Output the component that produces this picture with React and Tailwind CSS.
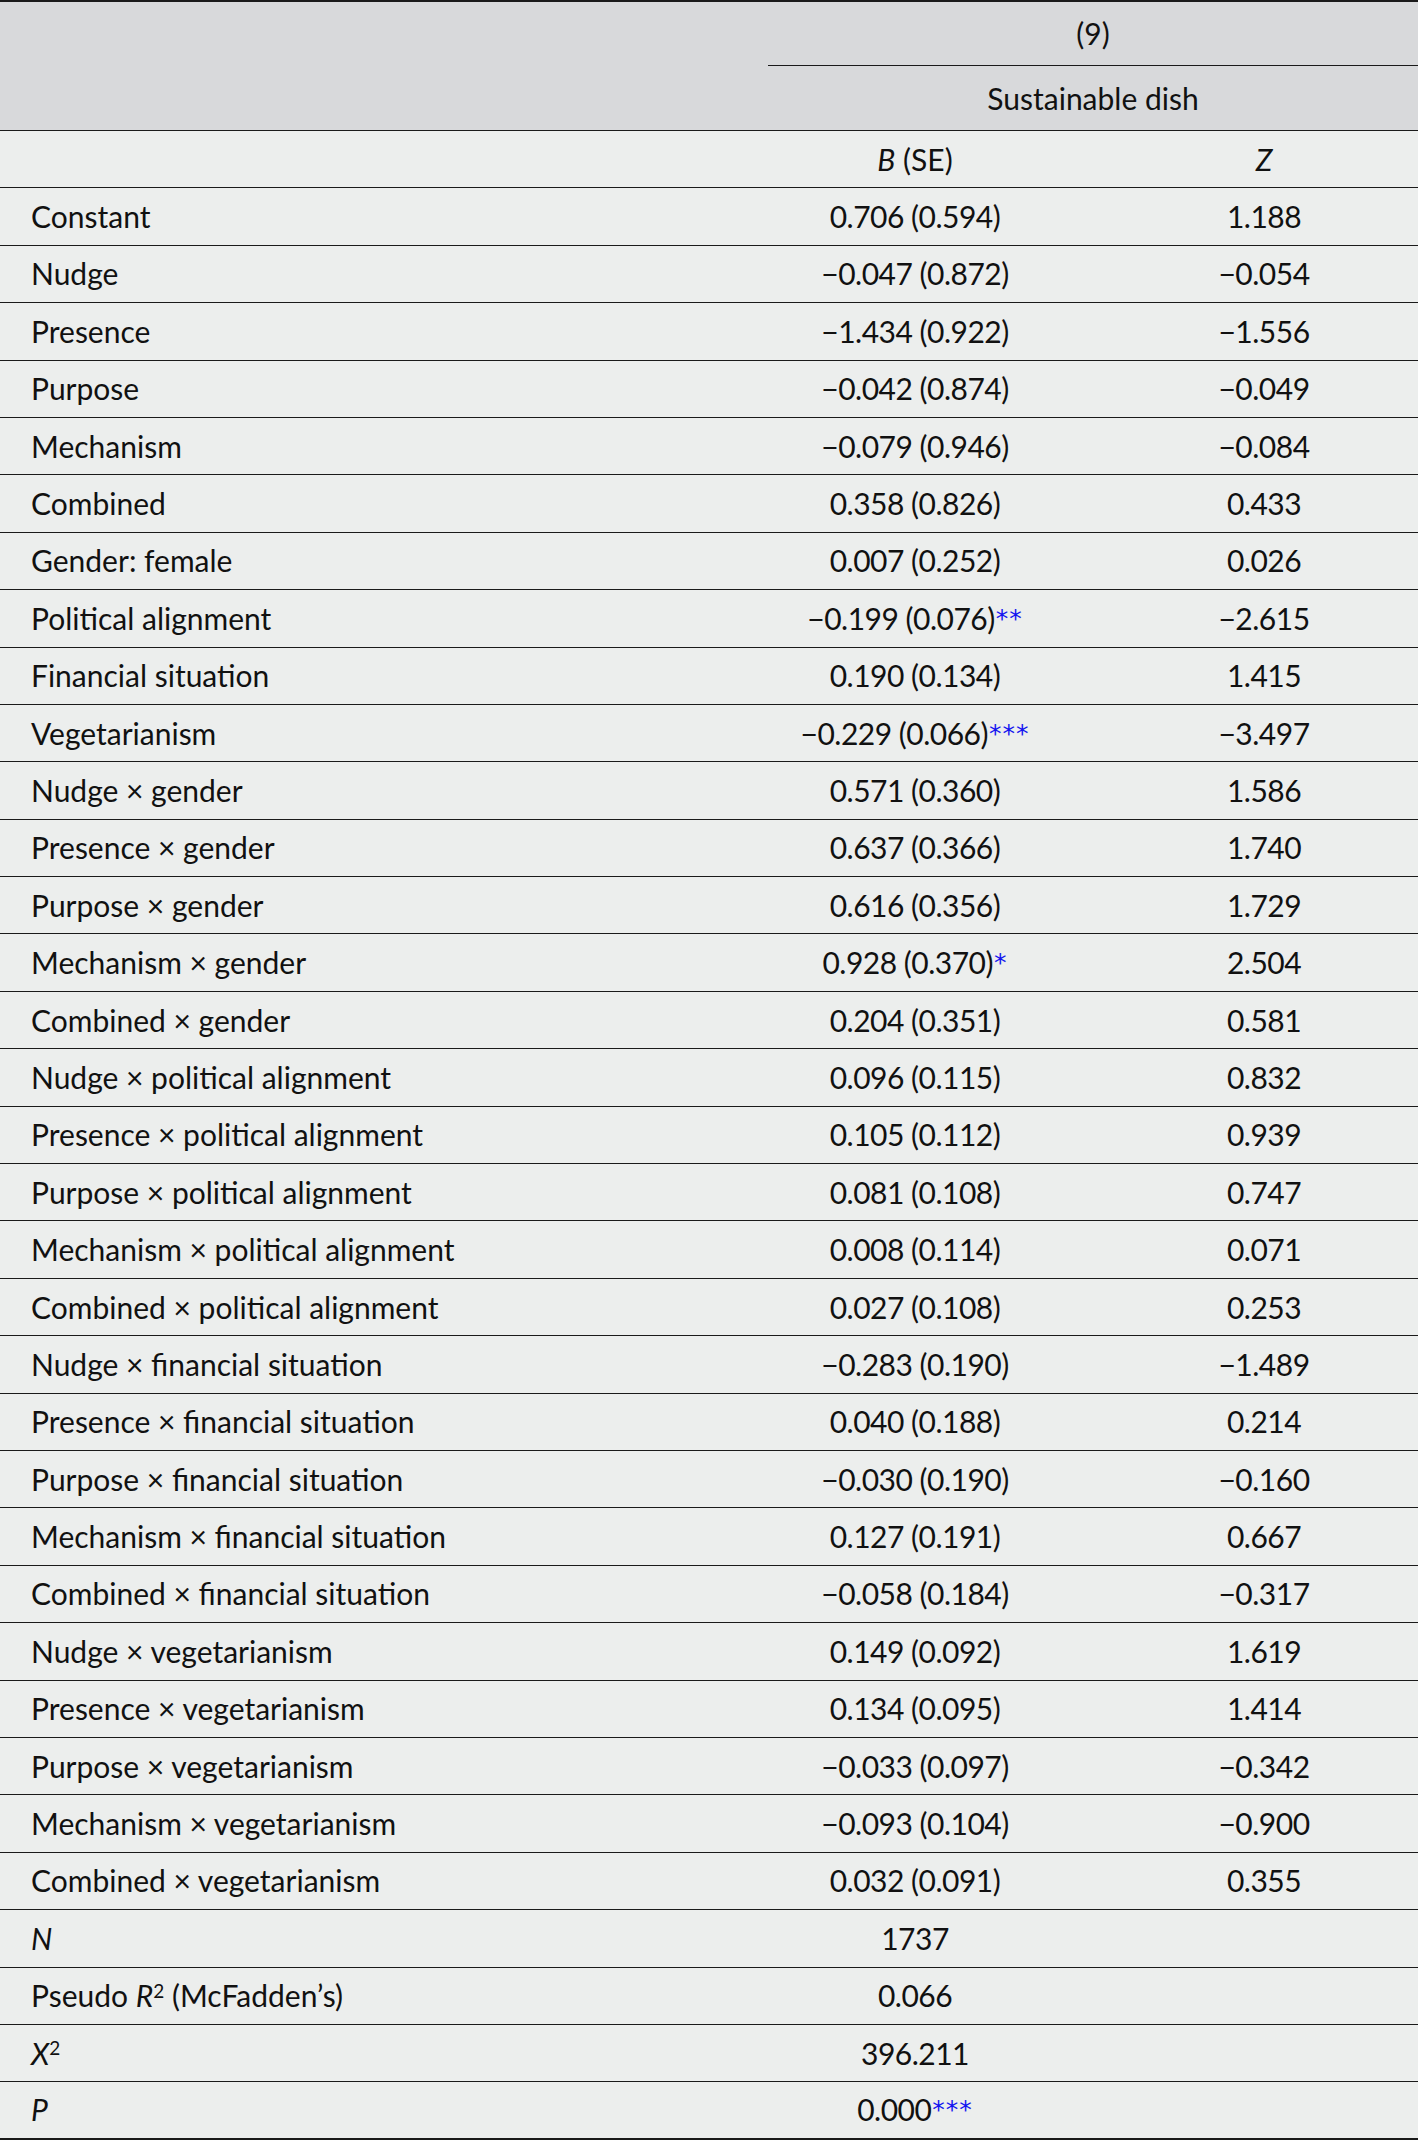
const rows = [
  ["Constant", "0.706 (0.594)", "", "1.188"],
  ["Nudge", "−0.047 (0.872)", "", "−0.054"],
  ["Presence", "−1.434 (0.922)", "", "−1.556"],
  ["Purpose", "−0.042 (0.874)", "", "−0.049"],
  ["Mechanism", "−0.079 (0.946)", "", "−0.084"],
  ["Combined", "0.358 (0.826)", "", "0.433"],
  ["Gender: female", "0.007 (0.252)", "", "0.026"],
  ["Political alignment", "−0.199 (0.076)", "**", "−2.615"],
  ["Financial situation", "0.190 (0.134)", "", "1.415"],
  ["Vegetarianism", "−0.229 (0.066)", "***", "−3.497"],
  ["Nudge × gender", "0.571 (0.360)", "", "1.586"],
  ["Presence × gender", "0.637 (0.366)", "", "1.740"],
  ["Purpose × gender", "0.616 (0.356)", "", "1.729"],
  ["Mechanism × gender", "0.928 (0.370)", "*", "2.504"],
  ["Combined × gender", "0.204 (0.351)", "", "0.581"],
  ["Nudge × political alignment", "0.096 (0.115)", "", "0.832"],
  ["Presence × political alignment", "0.105 (0.112)", "", "0.939"],
  ["Purpose × political alignment", "0.081 (0.108)", "", "0.747"],
  ["Mechanism × political alignment", "0.008 (0.114)", "", "0.071"],
  ["Combined × political alignment", "0.027 (0.108)", "", "0.253"],
  ["Nudge × financial situation", "−0.283 (0.190)", "", "−1.489"],
  ["Presence × financial situation", "0.040 (0.188)", "", "0.214"],
  ["Purpose × financial situation", "−0.030 (0.190)", "", "−0.160"],
  ["Mechanism × financial situation", "0.127 (0.191)", "", "0.667"],
  ["Combined × financial situation", "−0.058 (0.184)", "", "−0.317"],
  ["Nudge × vegetarianism", "0.149 (0.092)", "", "1.619"],
  ["Presence × vegetarianism", "0.134 (0.095)", "", "1.414"],
  ["Purpose × vegetarianism", "−0.033 (0.097)", "", "−0.342"],
  ["Mechanism × vegetarianism", "−0.093 (0.104)", "", "−0.900"],
  ["Combined × vegetarianism", "0.032 (0.091)", "", "0.355"],
];

// significance stars, drawn a bit heavier than Lato's own asterisk
function Stars({ s }) {
  if (!s) return null;
  return (
    <sup
      className="text-[#1414f0] text-[25px] tracking-[1px] relative top-[-3px] ml-[1px]"
      style={{ fontFamily: "'DejaVu Sans', sans-serif" }}
    >
      {s}
    </sup>
  );
}

function Row({ label, b, stars, z, last }) {
  return (
    <div
      className={
        "grid grid-cols-[768px_294px_1fr] items-center h-[57.4px] " +
        (last ? "border-b-2 border-[#1a1a1a]" : "border-b-[1.5px] border-[#1a1a1a]")
      }
    >
      <div className="pl-[31px]">{label}</div>
      <div className="text-center tracking-[-0.5px]">
        {b}
        <Stars s={stars} />
      </div>
      <div className="text-center pl-[48px] tracking-[-0.5px]">{z}</div>
    </div>
  );
}

export default function App() {
  return (
    <div
      className="w-[1418px] bg-[#eceeed] text-[30px] text-[#111] border-t-2 border-[#1a1a1a]"
      style={{ fontFamily: "Lato, 'Noto Sans', sans-serif" }}
    >
      <div className="bg-[#d8d9db] border-b-[1.5px] border-[#1a1a1a]">
        <div className="grid grid-cols-[768px_1fr] h-[64px]">
          <div></div>
          <div className="flex items-center justify-center border-b-[1.5px] border-[#1a1a1a]">(9)</div>
        </div>
        <div className="grid grid-cols-[768px_1fr] h-[64px] items-center">
          <div></div>
          <div className="text-center">Sustainable dish</div>
        </div>
      </div>
      <div className="grid grid-cols-[768px_294px_1fr] items-center h-[57.4px] border-b-[1.5px] border-[#1a1a1a]">
        <div></div>
        <div className="text-center">
          <i>B</i> (SE)
        </div>
        <div className="text-center pl-[48px]">
          <i>Z</i>
        </div>
      </div>
      {rows.map((r) => (
        <Row key={r[0]} label={r[0]} b={r[1]} stars={r[2]} z={r[3]} />
      ))}
      <Row label={<i>N</i>} b="1737" z="" />
      <Row
        label={
          <span>
            Pseudo <i>R</i>
            <sup className="text-[19px]">2</sup> (McFadden’s)
          </span>
        }
        b="0.066"
        z=""
      />
      <Row
        label={
          <span>
            <i>X</i>
            <sup className="text-[19px]">2</sup>
          </span>
        }
        b="396.211"
        z=""
      />
      <Row label={<i>P</i>} b="0.000" stars="***" z="" last />
    </div>
  );
}
